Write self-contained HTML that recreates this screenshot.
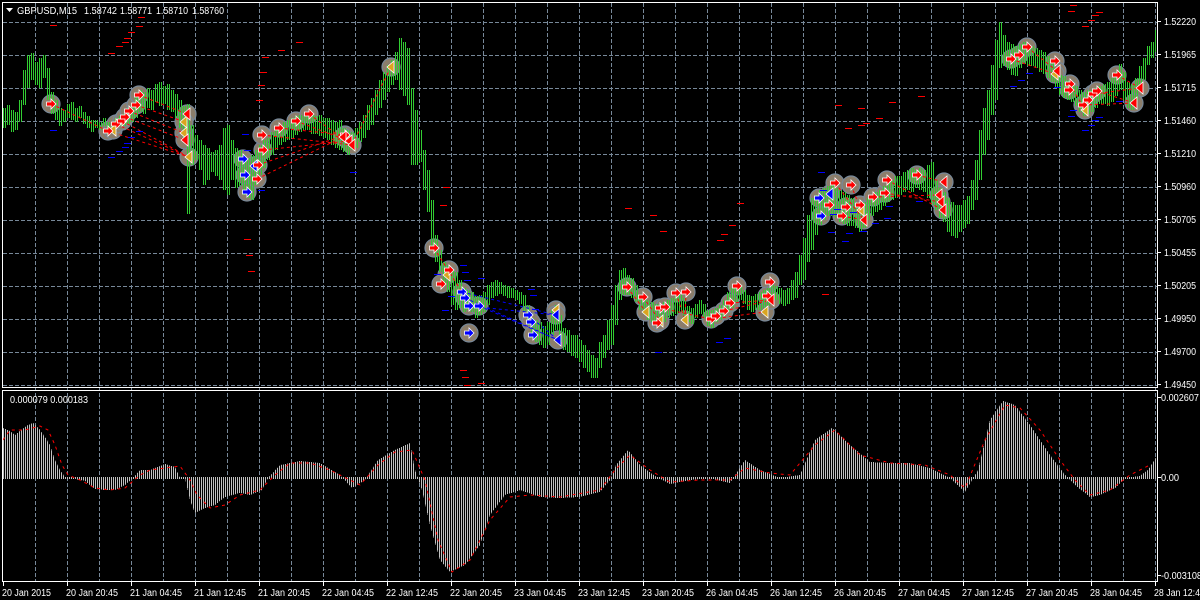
<!DOCTYPE html>
<html>
<head>
<meta charset="utf-8">
<title>GBPUSD,M15</title>
<style>
html,body{margin:0;padding:0;background:#000;width:1200px;height:600px;overflow:hidden}
svg{display:block}
text{font-family:"Liberation Sans",sans-serif;font-size:10px;fill:#fff}
</style>
</head>
<body>
<svg xmlns="http://www.w3.org/2000/svg" width="1200" height="600" viewBox="0 0 1200 600">
<defs>
<pattern id="sg" x="3" y="0" width="2" height="2" patternUnits="userSpaceOnUse"><rect width="1" height="2" fill="#32cd32"/></pattern>
<pattern id="sh" x="3" y="0" width="2" height="2" patternUnits="userSpaceOnUse"><rect width="1" height="2" fill="#c0c0c0"/></pattern>
<polygon id="ra" points="-4.5,-2 0,-2 0,-5 5,0 0,5 0,2 -4.5,2"/>
<polygon id="la" points="3,-6 3,6 -4,0"/>
</defs>
<rect width="1200" height="600" fill="#000"/>

<!-- grid -->
<path fill="none" stroke="#778899" stroke-width="1" stroke-dasharray="4 2" shape-rendering="crispEdges" d="M35.5 3V581M67.5 3V581M99.5 3V581M131.5 3V581M163.5 3V581M195.5 3V581M227.5 3V581M259.5 3V581M291.5 3V581M323.5 3V581M355.5 3V581M387.5 3V581M419.5 3V581M451.5 3V581M483.5 3V581M515.5 3V581M547.5 3V581M579.5 3V581M611.5 3V581M643.5 3V581M675.5 3V581M707.5 3V581M739.5 3V581M771.5 3V581M803.5 3V581M835.5 3V581M867.5 3V581M899.5 3V581M931.5 3V581M963.5 3V581M995.5 3V581M1027.5 3V581M1059.5 3V581M1091.5 3V581M1123.5 3V581M1155.5 3V581M3 22.5H1157M3 55.5H1157M3 88.5H1157M3 121.5H1157M3 154.5H1157M3 187.5H1157M3 220.5H1157M3 253.5H1157M3 286.5H1157M3 319.5H1157M3 352.5H1157M3 385.5H1157"/>

<!-- signal circles -->
<g fill="#8b7d6b" stroke="#778899" stroke-width="1.2">
<circle cx="51" cy="104" r="9"/><circle cx="108" cy="131" r="9"/><circle cx="113" cy="130" r="9"/><circle cx="116" cy="124" r="9"/><circle cx="122" cy="121" r="9"/><circle cx="125" cy="117" r="9"/><circle cx="129" cy="111" r="9"/><circle cx="136" cy="105" r="9"/><circle cx="139" cy="95" r="9"/>
<circle cx="187" cy="114" r="9"/><circle cx="184" cy="122" r="9"/><circle cx="184" cy="133" r="9"/><circle cx="185" cy="140" r="9"/><circle cx="189" cy="157" r="9"/>
<circle cx="243" cy="159" r="9"/><circle cx="245" cy="175" r="9"/><circle cx="247" cy="192" r="9"/><circle cx="254" cy="166" r="9"/><circle cx="258" cy="165" r="9"/><circle cx="257" cy="179" r="9"/><circle cx="263" cy="150" r="9"/><circle cx="262" cy="135" r="9"/><circle cx="279" cy="128" r="9"/><circle cx="296" cy="121" r="9"/><circle cx="309" cy="114" r="9"/>
<circle cx="345" cy="135" r="9"/><circle cx="343" cy="137" r="9"/><circle cx="349" cy="141" r="9"/><circle cx="352" cy="145" r="9"/><circle cx="391" cy="67" r="9"/>
<circle cx="434" cy="248" r="9"/><circle cx="449" cy="270" r="9"/><circle cx="447" cy="275" r="9"/><circle cx="441" cy="284" r="9"/><circle cx="462" cy="292" r="9"/><circle cx="465" cy="298" r="9"/><circle cx="469" cy="306" r="9"/><circle cx="479" cy="306" r="9"/><circle cx="469" cy="333" r="9"/>
<circle cx="528" cy="315" r="9"/><circle cx="531" cy="322" r="9"/><circle cx="533" cy="335" r="9"/><circle cx="556" cy="310" r="9"/><circle cx="556" cy="315" r="9"/><circle cx="558" cy="340" r="9"/>
<circle cx="627" cy="287" r="9"/><circle cx="643" cy="297" r="9"/><circle cx="646" cy="312" r="9"/><circle cx="660" cy="308" r="9"/><circle cx="665" cy="307" r="9"/><circle cx="657" cy="323" r="9"/><circle cx="660" cy="321" r="9"/><circle cx="676" cy="293" r="9"/><circle cx="686" cy="292" r="9"/><circle cx="685" cy="320" r="9"/>
<circle cx="711" cy="319" r="9"/><circle cx="716" cy="316" r="9"/><circle cx="724" cy="311" r="9"/><circle cx="730" cy="303" r="9"/><circle cx="737" cy="286" r="9"/><circle cx="765" cy="312" r="9"/><circle cx="770" cy="282" r="9"/><circle cx="767" cy="296" r="9"/><circle cx="771" cy="300" r="9"/>
<circle cx="819" cy="198" r="9"/><circle cx="830" cy="194" r="9"/><circle cx="835" cy="183" r="9"/><circle cx="829" cy="205" r="9"/><circle cx="821" cy="216" r="9"/><circle cx="842" cy="216" r="9"/><circle cx="846" cy="207" r="9"/><circle cx="851" cy="185" r="9"/><circle cx="860" cy="205" r="9"/><circle cx="861" cy="210" r="9"/><circle cx="864" cy="220" r="9"/><circle cx="873" cy="197" r="9"/><circle cx="885" cy="193" r="9"/><circle cx="887" cy="180" r="9"/><circle cx="917" cy="175" r="9"/><circle cx="944" cy="182" r="9"/><circle cx="939" cy="195" r="9"/><circle cx="941" cy="202" r="9"/><circle cx="943" cy="210" r="9"/>
<circle cx="1011" cy="59" r="9"/><circle cx="1019" cy="55" r="9"/><circle cx="1027" cy="47" r="9"/><circle cx="1055" cy="61" r="9"/><circle cx="1057" cy="71" r="9"/><circle cx="1055" cy="74" r="9"/><circle cx="1070" cy="84" r="9"/><circle cx="1069" cy="90" r="9"/><circle cx="1083" cy="105" r="9"/><circle cx="1088" cy="100" r="9"/><circle cx="1093" cy="94" r="9"/><circle cx="1097" cy="91" r="9"/><circle cx="1085" cy="110" r="9"/><circle cx="1117" cy="75" r="9"/><circle cx="1140" cy="88" r="9"/><circle cx="1134" cy="103" r="9"/>
</g>

<!-- price bars -->
<path fill="none" stroke="url(#sg)" stroke-width="4" shape-rendering="crispEdges" d="M5 108V128M9 105V125M13 110V132M17 112V130M21 100V122M25 70V105M29 55V88M33 53V80M37 62V85M41 58V88M45 55V78M49 68V100M53 92V114M57 100V120M61 108V126M65 110V122M69 104V118M73 102V120M77 108V122M81 106V118M85 112V124M89 116V128M93 120V132M97 120V128M101 122V130M105 118V126M109 122V134M113 122V130M117 118V128M121 116V126M125 114V126M129 108V124M133 104V122M137 96V118M141 90V112M145 92V114M149 88V108M153 90V110M157 84V102M161 82V106M165 86V104M169 84V110M173 90V112M177 94V118M181 100V128M185 106V140M189 104V214M193 125V165M197 135V160M201 140V170M205 145V185M209 148V180M213 152V172M217 150V176M221 145V180M225 128V190M229 125V195M233 140V180M237 148V188M241 150V186M245 155V195M249 158V198M253 155V200M257 150V185M261 145V175M265 140V168M269 138V160M273 132V155M277 128V150M281 125V145M285 122V142M289 120V140M293 118V138M297 116V135M301 115V132M305 116V130M309 112V130M313 114V134M317 116V134M321 115V136M325 118V138M329 118V140M333 120V145M337 122V148M341 120V150M345 128V152M349 130V155M353 132V150M357 128V148M361 122V142M365 115V138M369 105V130M373 98V125M377 90V115M381 80V108M385 72V100M389 65V92M393 60V85M397 52V80M401 38V90M405 42V96M409 48V105M413 88V165M417 110V165M421 130V162M425 150V190M429 170V212M433 200V246M437 235V262M441 250V272M445 262V285M449 265V292M453 270V305M457 272V310M461 280V308M465 288V312M469 290V310M473 292V312M477 296V318M481 295V315M485 292V312M489 285V305M493 282V298M497 280V296M501 282V294M505 285V296M509 286V298M513 288V298M517 290V300M521 292V304M525 295V312M529 305V325M533 318V338M537 320V342M541 322V345M545 326V348M549 322V345M553 310V335M557 305V330M561 315V342M565 328V350M569 330V352M573 335V356M577 335V358M581 340V362M585 345V368M589 350V372M593 355V378M597 358V378M601 342V368M605 335V358M609 320V350M613 305V345M617 285V325M621 270V300M625 268V295M629 275V295M633 278V298M637 285V302M641 295V310M645 298V314M649 300V320M653 302V322M657 304V324M661 305V326M665 302V322M669 300V318M673 298V316M677 296V314M681 295V312M685 298V318M689 306V322M693 308V324M697 304V318M701 300V314M705 304V318M709 310V326M713 310V328M717 308V322M721 305V320M725 300V316M729 292V312M733 288V308M737 284V302M741 285V300M745 290V304M749 295V310M753 296V312M757 294V310M761 292V310M765 290V308M769 288V306M773 285V302M777 286V300M781 288V304M785 290V306M789 288V304M793 280V300M797 272V298M801 255V285M805 238V280M809 215V262M813 198V250M817 195V235M821 190V225M825 188V220M829 186V216M833 184V216M837 188V218M841 190V222M845 192V224M849 195V226M853 198V226M857 202V228M861 205V232M865 202V228M869 198V220M873 195V216M877 192V212M881 190V210M885 186V206M889 182V202M893 180V200M897 176V198M901 176V195M905 172V192M909 170V190M913 168V192M917 170V188M921 168V190M925 170V192M929 165V198M933 162V205M937 180V210M941 188V218M945 192V222M949 198V232M953 202V236M957 205V238M961 205V232M965 200V228M969 196V224M973 180V210M977 160V200M981 130V180M985 108V155M989 90V140M993 65V115M997 40V100M1001 22V68M1005 35V66M1009 42V70M1013 44V75M1017 46V76M1021 44V68M1025 42V64M1029 44V66M1033 46V66M1037 48V68M1041 50V72M1045 52V74M1049 56V78M1053 62V82M1057 68V88M1061 75V95M1065 76V98M1069 80V100M1073 82V102M1077 86V106M1081 90V112M1085 92V116M1089 90V114M1093 90V112M1097 88V108M1101 86V104M1105 84V104M1109 82V106M1113 78V102M1117 72V96M1121 64V90M1125 72V100M1129 82V108M1133 84V110M1137 78V100M1141 66V92M1145 58V80M1149 46V65M1153 42V58M1157 30V52"/>

<!-- trade lines -->
<path fill="none" stroke="#ff0000" stroke-width="1" stroke-dasharray="3 3" d="M51 104L108 131M139 95L187 114M136 105L185 122M129 111L184 133M125 117L185 140M122 121L189 157M116 124L189 157M108 131L189 157M258 165L345 135M257 179L343 137M263 150L349 141M262 135L352 145M279 128L345 135M296 121L349 141M309 114L352 145M352 145L391 67M434 248L462 292M627 287L646 312M643 297L660 321M676 293L685 320M686 292L685 320M711 319L765 312M724 311L771 300M730 303L771 300M660 308L711 319M835 183L864 220M851 185L861 210M873 197L939 195M885 193L941 202M887 180L943 210M917 175L944 182M842 216L864 220M1011 59L1055 74M1027 47L1057 71M1070 84L1085 110M1083 105L1134 103M1093 94L1140 88M1097 91L1134 103M1117 75L1140 88"/>
<path fill="none" stroke="#0000ff" stroke-width="1" stroke-dasharray="3 3" d="M462 292L556 315M465 298L558 340M469 306L556 315M479 306L558 340M528 315L558 340"/>

<!-- SL / TP ticks -->
<path fill="none" stroke="#ff0000" stroke-width="1" shape-rendering="crispEdges" d="M50 25.5h7M108 53.5h7M116 46.5h7M122 42.5h7M124 38.5h7M128 32.5h7M136 26.5h7M138 17.5h7M256 100.5h7M258 85.5h7M260 72.5h7M262 57.5h7M278 50.5h7M296 42.5h7M244 239.5h7M246 255.5h7M248 271.5h7M440 205.5h7M443 187.5h7M460 370.5h7M462 377.5h7M464 385.5h7M478 383.5h7M625 208.5h7M650 215.5h7M660 231.5h7M717 240.5h7M721 234.5h7M729 225.5h7M737 203.5h7M835 105.5h7M858 108.5h7M889 102.5h7M918 96.5h7M845 128.5h7M858 125.5h7M863 123.5h7M876 118.5h7M822 294.5h7M1070 5.5h7M1068 11.5h7M1096 12.5h7M1092 15.5h7M1088 20.5h7M1082 26.5h7"/>
<path fill="none" stroke="#0000ff" stroke-width="1" shape-rendering="crispEdges" d="M50 130.5h7M136 131.5h7M128 137.5h7M124 143.5h7M122 147.5h7M116 151.5h7M108 157.5h7M242 134.5h7M244 150.5h7M258 190.5h7M350 172.5h7M460 265.5h7M462 272.5h7M464 280.5h7M478 278.5h7M434 274.5h7M448 296.5h7M442 310.5h7M528 289.5h7M530 295.5h7M532 309.5h7M655 352.5h7M716 342.5h7M724 338.5h7M818 172.5h7M820 190.5h7M834 209.5h7M830 214.5h7M850 212.5h7M828 232.5h7M846 233.5h7M842 241.5h7M860 231.5h7M886 206.5h7M884 218.5h7M872 223.5h7M916 201.5h7M1010 86.5h7M1018 80.5h7M1026 73.5h7M1054 87.5h7M1070 110.5h7M1068 116.5h7M1096 117.5h7M1092 120.5h7M1088 125.5h7M1082 130.5h7M1116 101.5h7"/>

<!-- arrows -->
<g stroke="#fff" stroke-width="0.8">
<g fill="#daa520">
<use href="#la" x="113" y="130"/><use href="#la" x="184" y="122"/><use href="#la" x="184" y="133"/><use href="#la" x="189" y="157"/><use href="#la" x="391" y="67"/><use href="#la" x="447" y="275"/><use href="#la" x="556" y="310"/><use href="#la" x="646" y="312"/><use href="#la" x="660" y="321"/><use href="#la" x="685" y="320"/><use href="#la" x="765" y="312"/><use href="#la" x="861" y="210"/><use href="#la" x="1055" y="74"/><use href="#la" x="1085" y="110"/>
</g>
<g fill="#0000ff">
<use href="#ra" x="243" y="159"/><use href="#ra" x="245" y="175"/><use href="#ra" x="247" y="192"/><use href="#la" x="254" y="166"/><use href="#ra" x="462" y="292"/><use href="#ra" x="465" y="298"/><use href="#ra" x="469" y="306"/><use href="#ra" x="479" y="306"/><use href="#ra" x="469" y="333"/><use href="#ra" x="528" y="315"/><use href="#ra" x="531" y="322"/><use href="#ra" x="533" y="335"/><use href="#la" x="556" y="315"/><use href="#la" x="558" y="340"/><use href="#ra" x="819" y="198"/><use href="#la" x="830" y="194"/><use href="#ra" x="821" y="216"/>
</g>
<g fill="#ff0000">
<use href="#ra" x="51" y="104"/><use href="#ra" x="108" y="131"/><use href="#ra" x="116" y="124"/><use href="#ra" x="122" y="121"/><use href="#ra" x="125" y="117"/><use href="#ra" x="129" y="111"/><use href="#ra" x="136" y="105"/><use href="#ra" x="139" y="95"/><use href="#la" x="187" y="114"/><use href="#la" x="185" y="140"/><use href="#ra" x="258" y="165"/><use href="#ra" x="257" y="179"/><use href="#ra" x="263" y="150"/><use href="#ra" x="262" y="135"/><use href="#ra" x="279" y="128"/><use href="#ra" x="296" y="121"/><use href="#ra" x="309" y="114"/><use href="#ra" x="345" y="135"/><use href="#la" x="343" y="137"/><use href="#la" x="349" y="141"/><use href="#la" x="352" y="145"/><use href="#ra" x="434" y="248"/><use href="#ra" x="449" y="270"/><use href="#ra" x="441" y="284"/><use href="#ra" x="627" y="287"/><use href="#ra" x="643" y="297"/><use href="#ra" x="660" y="308"/><use href="#ra" x="665" y="307"/><use href="#ra" x="657" y="323"/><use href="#ra" x="676" y="293"/><use href="#ra" x="686" y="292"/><use href="#ra" x="711" y="319"/><use href="#ra" x="716" y="316"/><use href="#ra" x="724" y="311"/><use href="#ra" x="730" y="303"/><use href="#ra" x="737" y="286"/><use href="#ra" x="770" y="282"/><use href="#ra" x="767" y="296"/><use href="#la" x="771" y="300"/><use href="#ra" x="835" y="183"/><use href="#ra" x="829" y="205"/><use href="#ra" x="842" y="216"/><use href="#ra" x="846" y="207"/><use href="#ra" x="851" y="185"/><use href="#ra" x="860" y="205"/><use href="#la" x="864" y="220"/><use href="#ra" x="873" y="197"/><use href="#ra" x="885" y="193"/><use href="#ra" x="887" y="180"/><use href="#ra" x="917" y="175"/><use href="#la" x="944" y="182"/><use href="#la" x="939" y="195"/><use href="#la" x="941" y="202"/><use href="#la" x="943" y="210"/><use href="#ra" x="1011" y="59"/><use href="#ra" x="1019" y="55"/><use href="#ra" x="1027" y="47"/><use href="#ra" x="1055" y="61"/><use href="#la" x="1057" y="71"/><use href="#ra" x="1070" y="84"/><use href="#ra" x="1069" y="90"/><use href="#ra" x="1083" y="105"/><use href="#ra" x="1088" y="100"/><use href="#ra" x="1093" y="94"/><use href="#ra" x="1097" y="91"/><use href="#ra" x="1117" y="75"/><use href="#la" x="1140" y="88"/><use href="#la" x="1134" y="103"/>
</g>
</g>

<!-- histogram -->
<polygon fill="url(#sh)" shape-rendering="crispEdges" points="3,428 10,431 15,435 20,431 28,425 33,423 40,430 47,440 50,445 55,460 60,470 65,477 70,478 75,479 85,481 95,489 105,490 115,490 125,485 133,478 140,470 150,470 165,464 175,467 180,478 185,478 190,500 195,513 205,508 215,505 225,497 240,493 250,495 262,490 268,478 280,465 300,461 320,463 340,475 352,488 365,480 378,460 395,450 410,443 415,470 422,490 430,525 440,560 450,572 465,565 480,545 490,515 505,495 520,490 540,497 560,498 580,497 600,492 610,480 616,465 628,450 640,465 655,476 670,484 690,480 710,478 730,483 745,460 760,470 780,478 800,475 815,440 832,428 850,445 870,462 890,463 910,463 930,468 950,478 965,492 978,470 990,420 1003,401 1015,405 1030,425 1050,455 1065,475 1075,485 1090,497 1100,495 1115,488 1125,478 1140,476 1148,470 1157,456 1157,478 3,478"/>
<rect x="3" y="477" width="1154" height="2" fill="url(#sh)" shape-rendering="crispEdges"/>
<polyline fill="none" stroke="#ff0000" stroke-width="1" stroke-dasharray="3 4" points="3,440 10,430 25,430 40,426 48,430 55,445 62,465 68,475 80,480 95,488 110,490 125,488 140,475 150,470 165,468 180,466 190,480 197,495 210,508 225,505 240,495 260,490 275,475 290,463 310,463 330,470 350,480 360,485 378,465 395,452 412,450 425,480 438,540 452,572 470,560 490,520 510,497 530,495 560,497 600,490 615,470 630,455 650,470 670,482 700,480 730,480 745,468 770,473 790,475 815,445 835,430 860,455 890,463 925,465 950,475 965,488 985,440 1005,405 1020,408 1040,430 1060,460 1075,480 1090,495 1110,490 1130,475 1150,465"/>

<!-- frames -->
<rect x="1158" y="0" width="42" height="600" fill="#000"/>
<rect x="0" y="582" width="1200" height="18" fill="#000"/>
<g fill="none" stroke="#fff" stroke-width="1" shape-rendering="crispEdges">
<rect x="2.5" y="2.5" width="1155" height="385"/>
<rect x="2.5" y="390.5" width="1155" height="191"/>
<path d="M1158 21.5H1161M1158 54.5H1161M1158 87.5H1161M1158 120.5H1161M1158 153.5H1161M1158 186.5H1161M1158 219.5H1161M1158 252.5H1161M1158 285.5H1161M1158 318.5H1161M1158 351.5H1161M1158 384.5H1161M1158 397.5H1161M1158 477.5H1161M1158 575.5H1161M3.5 582V586M67.5 582V586M131.5 582V586M195.5 582V586M259.5 582V586M323.5 582V586M387.5 582V586M451.5 582V586M515.5 582V586M579.5 582V586M643.5 582V586M707.5 582V586M771.5 582V586M835.5 582V586M899.5 582V586M963.5 582V586M1027.5 582V586M1091.5 582V586M1155.5 582V586"/>
</g>
<polygon points="6,8 13,8 9.5,12" fill="#fff"/>
<text x="17" y="14" textLength="60" lengthAdjust="spacingAndGlyphs">GBPUSD,M15</text>
<text x="84" y="14" textLength="33" lengthAdjust="spacingAndGlyphs">1.58742</text>
<text x="120" y="14" textLength="32" lengthAdjust="spacingAndGlyphs">1.58771</text>
<text x="156" y="14" textLength="32" lengthAdjust="spacingAndGlyphs">1.58710</text>
<text x="192" y="14" textLength="32" lengthAdjust="spacingAndGlyphs">1.58760</text>
<text x="10" y="403" textLength="78" lengthAdjust="spacingAndGlyphs">0.000079 0.000183</text>
<g>
<text x="1164" y="25" textLength="32" lengthAdjust="spacingAndGlyphs">1.52220</text>
<text x="1164" y="58" textLength="32" lengthAdjust="spacingAndGlyphs">1.51965</text>
<text x="1164" y="91" textLength="32" lengthAdjust="spacingAndGlyphs">1.51715</text>
<text x="1164" y="124" textLength="32" lengthAdjust="spacingAndGlyphs">1.51460</text>
<text x="1164" y="157" textLength="32" lengthAdjust="spacingAndGlyphs">1.51210</text>
<text x="1164" y="190" textLength="32" lengthAdjust="spacingAndGlyphs">1.50960</text>
<text x="1164" y="223" textLength="32" lengthAdjust="spacingAndGlyphs">1.50705</text>
<text x="1164" y="256" textLength="32" lengthAdjust="spacingAndGlyphs">1.50455</text>
<text x="1164" y="289" textLength="32" lengthAdjust="spacingAndGlyphs">1.50205</text>
<text x="1164" y="322" textLength="32" lengthAdjust="spacingAndGlyphs">1.49950</text>
<text x="1164" y="355" textLength="32" lengthAdjust="spacingAndGlyphs">1.49700</text>
<text x="1164" y="388" textLength="32" lengthAdjust="spacingAndGlyphs">1.49450</text>
<text x="1161" y="401" textLength="38" lengthAdjust="spacingAndGlyphs">0.002607</text>
<text x="1161" y="481" textLength="18" lengthAdjust="spacingAndGlyphs">0.00</text>
<text x="1161" y="579" textLength="41" lengthAdjust="spacingAndGlyphs">-0.003108</text>
</g>
<g>
<text x="2" y="596" textLength="49" lengthAdjust="spacingAndGlyphs">20 Jan 2015</text>
<text x="66" y="596" textLength="52" lengthAdjust="spacingAndGlyphs">20 Jan 20:45</text>
<text x="130" y="596" textLength="52" lengthAdjust="spacingAndGlyphs">21 Jan 04:45</text>
<text x="194" y="596" textLength="52" lengthAdjust="spacingAndGlyphs">21 Jan 12:45</text>
<text x="258" y="596" textLength="52" lengthAdjust="spacingAndGlyphs">21 Jan 20:45</text>
<text x="322" y="596" textLength="52" lengthAdjust="spacingAndGlyphs">22 Jan 04:45</text>
<text x="386" y="596" textLength="52" lengthAdjust="spacingAndGlyphs">22 Jan 12:45</text>
<text x="450" y="596" textLength="52" lengthAdjust="spacingAndGlyphs">22 Jan 20:45</text>
<text x="514" y="596" textLength="52" lengthAdjust="spacingAndGlyphs">23 Jan 04:45</text>
<text x="578" y="596" textLength="52" lengthAdjust="spacingAndGlyphs">23 Jan 12:45</text>
<text x="642" y="596" textLength="52" lengthAdjust="spacingAndGlyphs">23 Jan 20:45</text>
<text x="706" y="596" textLength="52" lengthAdjust="spacingAndGlyphs">26 Jan 04:45</text>
<text x="770" y="596" textLength="52" lengthAdjust="spacingAndGlyphs">26 Jan 12:45</text>
<text x="834" y="596" textLength="52" lengthAdjust="spacingAndGlyphs">26 Jan 20:45</text>
<text x="898" y="596" textLength="52" lengthAdjust="spacingAndGlyphs">27 Jan 04:45</text>
<text x="962" y="596" textLength="52" lengthAdjust="spacingAndGlyphs">27 Jan 12:45</text>
<text x="1026" y="596" textLength="52" lengthAdjust="spacingAndGlyphs">27 Jan 20:45</text>
<text x="1090" y="596" textLength="52" lengthAdjust="spacingAndGlyphs">28 Jan 04:45</text>
<text x="1154" y="596" textLength="46" lengthAdjust="spacingAndGlyphs">28 Jan 12:4</text>
</g>
</svg>
</body>
</html>
